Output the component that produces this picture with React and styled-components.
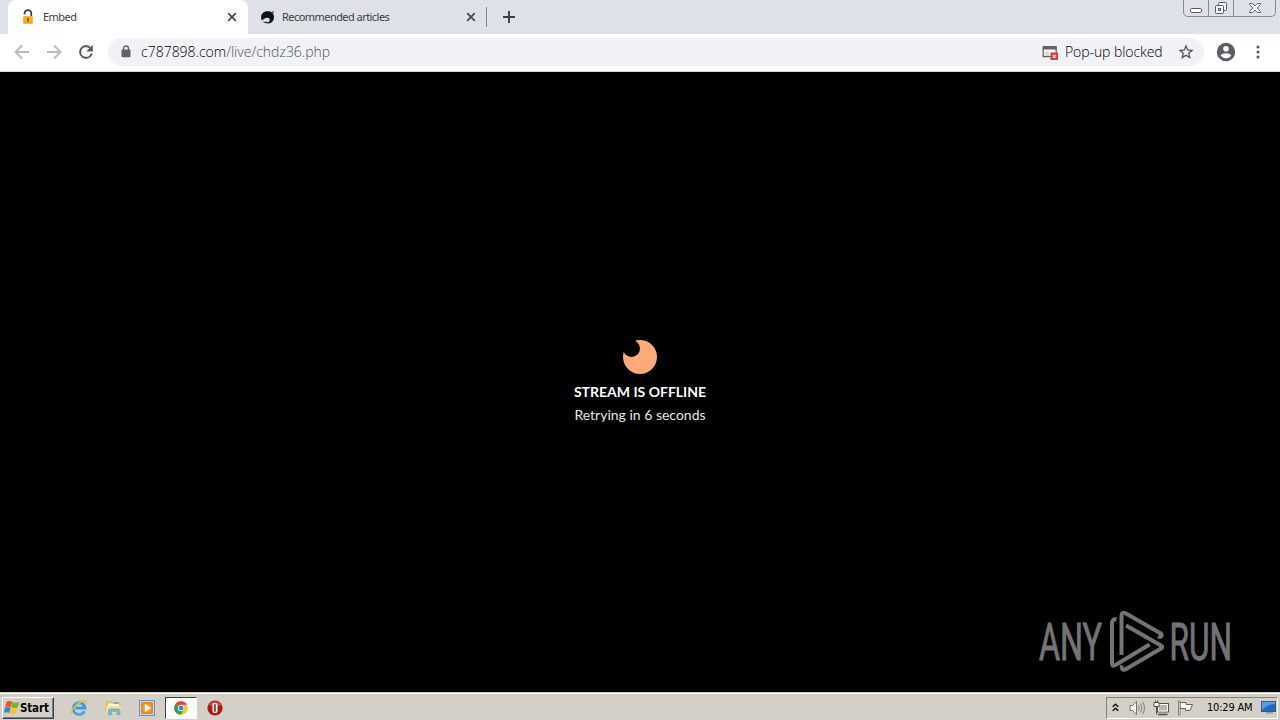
import React from "react";
import styled, { createGlobalStyle } from "styled-components";

const GlobalStyle = createGlobalStyle`
    * {
        box-sizing: border-box;
    }

    body {
        margin: 0;
        background: #000;
        overflow: hidden;
    }

    svg {
        display: block;
        flex: none;
    }
`;

const LockFavicon = () => (
    <svg width="16" height="16" viewBox="0 0 16 16">
        <path d="M4.500 5.500V4.600a3.400 3.400 0 0 1 6.800 0V7" fill="none" stroke="#3b3b3b" strokeWidth="1.700" />
        <rect x="3.200" y="7" width="9.600" height="7.600" rx="1" fill="#fbb216" />
        <path d="M3.400 12.500h9.200v1.200q0 .9-1 .9H4.400q-1 0-1-.9z" fill="#ef9a12" />
        <path d="M7.300 9h1.500v3.200H7.300z" fill="#70430b" />
    </svg>
);

const ArticlesFavicon = () => (
    <svg width="16" height="16" viewBox="0 0 16 16">
        <path d="M2 11.500C-.2 8 1.500 3.500 5.500 2.500c3-.8 5.500-.3 7 1.500 2 2.500 2 6 .2 8.200-1.600 2-4.500 2.800-7.200 1.800 2.500-.3 4.200-1.500 4.300-3.300 0-1.700-1.500-2.400-3.300-1.900-1.700.4-2.700 1.500-4.500 2.700z" fill="#0c1020" />
        <path d="M2.500 12.200q2 1.300 4 .3l.8 1.300q-3.200.8-4.800-1.600z" fill="#0c1020" />
        <path d="M11.500 3l2.500-1.300-.6 3z" fill="#4c5160" />
    </svg>
);

const CloseIcon = () => (
    <svg width="10" height="10" viewBox="0 0 10 10">
        <path d="M1.200 1.200l7.600 7.600M8.800 1.200L1.200 8.800" stroke="#45494d" strokeWidth="1.700" />
    </svg>
);

const PlusIcon = () => (
    <svg width="14" height="14" viewBox="0 0 14 14">
        <path d="M7 1v12M1 7h12" stroke="#3c4043" strokeWidth="1.900" />
    </svg>
);

const ArrowIcon = ({ forward }) => (
    <svg width="24" height="24" viewBox="0 0 24 24">
        <path
            d={forward ? "M5 12h13M12 5.500l6.500 6.500-6.500 6.500" : "M19 12H6M12 5.500L5.500 12l6.500 6.500"}
            fill="none"
            stroke="#bababc"
            strokeWidth="1.900"
        />
    </svg>
);

const ReloadIcon = () => (
    <svg width="20" height="20" viewBox="0 0 24 24">
        <path
            d="M17.650 6.350A7.960 7.960 0 0 0 12 4a8 8 0 1 0 7.730 10h-2.080A6 6 0 1 1 12 6c1.660 0 3.140.690 4.220 1.780L13 11h7V4z"
            fill="#55585c"
            stroke="#55585c"
            strokeWidth=".5"
        />
    </svg>
);

const PadlockIcon = () => (
    <svg width="10" height="13" viewBox="0 0 10 13">
        <path d="M2.500 5V3.500a2.500 2.500 0 0 1 5 0V5" fill="none" stroke="#5f6368" strokeWidth="1.400" />
        <rect x=".5" y="4.500" width="9" height="7.800" rx="1" fill="#5f6368" />
    </svg>
);

const PopupIcon = () => (
    <svg width="16" height="16" viewBox="0 0 16 16">
        <path d="M1.200 3h13v9.500h-13z" fill="#fff" stroke="#5f6368" strokeWidth="1.300" />
        <path d="M1 2h13.500v3.500H1z" fill="#5f6368" />
        <path d="M3 8h4M3 10h4" stroke="#b5b8bb" />
        <rect x="8.500" y="8.500" width="7.500" height="7.500" fill="#d93b3f" />
        <path d="M10.800 10.800l3 3M13.800 10.800l-3 3" stroke="#fff" strokeWidth="1.200" />
    </svg>
);

const StarIcon = () => (
    <svg width="18" height="18" viewBox="0 0 24 24">
        <path
            d="M22 9.240l-7.190-.620L12 2 9.190 8.630 2 9.240l5.460 4.730L5.820 21 12 17.270 18.180 21l-1.630-7.030zM12 15.400l-3.760 2.270 1-4.280-3.320-2.880 4.380-.380L12 6.100l1.710 4.040 4.380.380-3.320 2.880 1 4.280z"
            fill="#505458"
            stroke="#505458"
            strokeWidth=".2"
        />
    </svg>
);

const AvatarIcon = () => (
    <svg width="20" height="20" viewBox="0 0 20 20">
        <circle cx="10" cy="10" r="9.200" fill="#5a5d61" />
        <circle cx="10" cy="6.800" r="2.800" fill="#fff" />
        <path d="M4.500 13.600Q6 11.200 10 11.200t5.500 2.400Q13.500 16.300 10 16.300t-5.500-2.700z" fill="#fff" />
    </svg>
);

const MenuIcon = () => (
    <svg width="4" height="14" viewBox="0 0 4 14">
        <circle cx="2" cy="2" r="1.500" fill="#55585c" />
        <circle cx="2" cy="7" r="1.500" fill="#55585c" />
        <circle cx="2" cy="12" r="1.500" fill="#55585c" />
    </svg>
);

const MinimizeGlyph = () => (
    <svg width="14" height="14" viewBox="0 0 14 14">
        <rect x="1.500" y="7.500" width="11" height="4" rx="1.200" fill="#fff" stroke="#565b66" />
    </svg>
);

const RestoreGlyph = () => (
    <svg width="14" height="14" viewBox="0 0 14 14">
        <rect x="4.500" y="1.500" width="8" height="8" rx="1" fill="#f4f5f8" stroke="#565b66" />
        <rect x="1.500" y="4.500" width="8" height="8" rx="1" fill="#f4f5f8" stroke="#565b66" />
        <rect x="4.500" y="7.500" width="2" height="2" fill="#fff" stroke="#565b66" />
    </svg>
);

const CloseGlyph = () => (
    <svg width="14" height="12" viewBox="0 0 14 12">
        <path
            d="M1.500 1.500h3.200L7 3.800l2.300-2.300h3.200v1L9.200 6l3.300 3.500v1H9.300L7 8.200l-2.300 2.300H1.500v-1L4.800 6 1.500 2.500z"
            fill="#f7f8fa"
            stroke="#565b66"
        />
    </svg>
);

const Moon = () => (
    <svg width="34" height="34" viewBox="0 0 34 34">
        <circle cx="17" cy="17" r="17" fill="#ffab78" />
        <circle cx="8.500" cy="8.500" r="8.500" fill="#000" />
        <path d="M0 0h13L8 9 0 12z" fill="#000" />
    </svg>
);

const AnyRunLogo = () => (
    <svg width="210" height="72" viewBox="0 0 210 72">
        <g fill="#747474" stroke="#747474" strokeWidth="1" fontFamily="Roboto, sans-serif" fontSize="52">
            <text x="3" y="51" textLength="63" lengthAdjust="spacingAndGlyphs">ANY</text>
            <text x="133.500" y="51" textLength="62.500" lengthAdjust="spacingAndGlyphs">RUN</text>
        </g>
        <g fill="none" stroke="#747474" strokeWidth="4" strokeLinejoin="round">
            <path d="M80.500 10.500c-3-.7-4.500 1-4.500 3.500v40q0 4 3.500 2L113.500 35.500" />
            <path d="M85.500 46V7q0-5 4.500-2.500L124 24c3 2 1.500 5-2 3.500" />
            <path d="M90 16.500L125 36.500q2.500 1.500 0 3L90 60c-3 1.800-5-.5-4-3.500" />
        </g>
    </svg>
);

const WindowsFlag = () => (
    <svg width="16" height="15" viewBox="0 0 16 15">
        <path d="M2.800 1.600Q5.500.2 8.300 1.700L6.900 7Q4 5.800 1.200 7z" fill="#e9562a" />
        <path d="M8.700 2.100q2.900 1.500 6.500-.1l-1.700 5.400Q10 8.500 7.300 7.200z" fill="#79b52b" />
        <path d="M1 7.500q2.900-1.200 5.700 0L5.200 13Q2.600 11.600-.2 12.900z" fill="#3c83d8" />
        <path d="M7.100 7.900q2.800 1.300 6.100.1l-1.600 5.300q-3.200 1.500-6-.1z" fill="#f9c428" />
    </svg>
);

const ExplorerIcon = () => (
    <svg width="18" height="18" viewBox="0 0 18 18">
        <path d="M14.300 12.200a5.800 5.800 0 1 1 .6-3.200H5.500" fill="none" stroke="#3b9fdf" strokeWidth="2.900" />
        <path d="M13 12.500a5 5 0 0 1-8-.5" fill="none" stroke="#86d0f4" />
        <path d="M2 15.500C-.5 13 5.500 5 11.500 2.500c3-1.300 5-1 4.500 1.500" fill="none" stroke="#e8bd35" strokeWidth="1.500" />
    </svg>
);

const FolderIcon = () => (
    <svg width="17" height="17" viewBox="0 0 17 17">
        <path d="M1 3.500l1-1h4l1 1.500h8v9H1z" fill="#e9cb67" stroke="#cda73e" strokeWidth=".6" />
        <path d="M3 4.500h11V9H3z" fill="#f8f6dd" />
        <path d="M8.500 3h5v2h-5z" fill="#72bb70" />
        <path d="M1 7h15v7H1z" fill="#f5df91" />
        <path d="M3.500 15.500V12q0-2 2-2H13q2 0 2 2v3.500h-3V12.300H6.500v3.200z" fill="#75bce2" stroke="#5199c6" strokeWidth=".6" />
    </svg>
);

const PlayerIcon = () => (
    <svg width="16" height="16" viewBox="0 0 16 16">
        <rect x=".5" y=".5" width="15" height="15" fill="#bddcf4" stroke="#5798cd" />
        <rect x="2" y="2" width="12" height="12" rx="1.500" fill="#ef8517" />
        <circle cx="8" cy="8" r="4.700" fill="#f39a35" />
        <path d="M5.800 3.800L12 8l-6.200 4.200z" fill="#fff" />
    </svg>
);

const ChromeIcon = () => (
    <svg width="14" height="14" viewBox="0 0 14 14">
        <circle cx="7" cy="7" r="6.800" fill="#fbc91e" />
        <path d="M7 7L1.100 3.600A6.800 6.800 0 0 1 12.900 3.800H7z" fill="#e1443a" />
        <path d="M7 7L1.100 3.600A6.800 6.800 0 0 0 6.600 13.800L10 8.500z" fill="#30a350" />
        <circle cx="7" cy="7" r="3.200" fill="#fff" />
        <circle cx="7" cy="7" r="2.500" fill="#4285e8" />
    </svg>
);

const OperaIcon = () => (
    <svg width="16" height="16" viewBox="0 0 16 16">
        <circle cx="8" cy="8" r="7.600" fill="#b01818" />
        <path d="M2 5a6.800 6.800 0 0 1 12 0q-6 2.500-12 0z" fill="#d54c48" />
        <rect x="5.500" y="3" width="5" height="10" rx="2" fill="#fff" />
        <rect x="7.200" y="4" width="1.600" height="8" rx=".8" fill="#a01616" />
    </svg>
);

const ChevronsIcon = () => (
    <svg width="7" height="9" viewBox="0 0 7 9">
        <path d="M.7 3.800l2.800-2.600 2.800 2.600M.7 7.800l2.800-2.600 2.800 2.600" fill="none" stroke="#111" strokeWidth="1.500" />
    </svg>
);

const SpeakerIcon = () => (
    <svg width="17" height="16" viewBox="0 0 17 16">
        <path d="M1 5.500h2.500l4-4v13l-4-4H1z" fill="#fff" stroke="#77736c" />
        <path d="M9.500 5.500q1.500 2.500 0 5M11.500 3.500q3 4.500 0 9M13.500 1.800q4 6.200 0 12.400" fill="none" stroke="#858078" />
    </svg>
);

const NetworkIcon = () => (
    <svg width="17" height="16" viewBox="0 0 17 16">
        <rect x="4.500" y="3.500" width="11" height="8.500" fill="#b9b6b0" stroke="#54514c" />
        <path d="M5.500 11V4.500h9V11z" fill="none" stroke="#fff" />
        <path d="M5 14.500h9.500" stroke="#54514c" strokeWidth="1.600" />
        <path d="M1 2.500h5v4H1zM2.500.5v2M4.500.5v2M3.500 7v7.500" fill="#fff" stroke="#54514c" />
    </svg>
);

const FlagIcon = () => (
    <svg width="17" height="16" viewBox="0 0 17 16">
        <path d="M3 2.500h6v2h6.500L13 10.500H8.500v-2H3z" fill="#fff" stroke="#67635e" />
        <path d="M1.500 1h1.500v14H1.500z" fill="#fff" stroke="#67635e" strokeWidth=".8" />
    </svg>
);

const DesktopIcon = () => (
    <svg width="15" height="13" viewBox="0 0 15 13">
        <rect x=".5" y=".5" width="14" height="10" fill="#2469be" stroke="#315a91" />
        <path d="M1 1h13v2Q7 3 1 9z" fill="#5b9ce1" />
        <path d="M5 12h7" stroke="#6e8094" />
    </svg>
);

const App = () => {
    return (
        <Screen>
            <GlobalStyle />
            <TabStrip>
                <Tab $active>
                    <LockFavicon />
                    <TabTitle $gap="7px">Embed</TabTitle>
                    <CloseIcon />
                </Tab>
                <Tab>
                    <ArticlesFavicon />
                    <TabTitle $gap="6px">Recommended articles</TabTitle>
                    <CloseIcon />
                </Tab>
                <TabDivider />
                <PlusIcon />
                <WindowControls>
                    <WindowButton $width="24px"><MinimizeGlyph /></WindowButton>
                    <WindowButton $width="25px"><RestoreGlyph /></WindowButton>
                    <WindowButton $width="42px"><CloseGlyph /></WindowButton>
                </WindowControls>
            </TabStrip>
            <Toolbar>
                <NavButtons>
                    <ArrowIcon />
                    <ArrowIcon forward />
                    <ReloadIcon />
                </NavButtons>
                <AddressBar>
                    <PadlockIcon />
                    <Url><b>c787898.com</b>/live/chdz36.php</Url>
                    <PopupIcon />
                    <PopupNotice>Pop-up blocked</PopupNotice>
                    <StarIcon />
                </AddressBar>
                <ToolbarActions>
                    <AvatarIcon />
                    <MenuIcon />
                </ToolbarActions>
            </Toolbar>
            <Page>
                <Moon />
                <StreamTitle>STREAM IS OFFLINE</StreamTitle>
                <StreamStatus>Retrying in 6 seconds</StreamStatus>
                <Watermark>
                    <AnyRunLogo />
                </Watermark>
            </Page>
            <Taskbar>
                <StartButton>
                    <WindowsFlag />
                    Start
                </StartButton>
                <QuickLaunch>
                    <TaskItem><ExplorerIcon /></TaskItem>
                    <TaskItem><FolderIcon /></TaskItem>
                    <TaskItem><PlayerIcon /></TaskItem>
                    <TaskItem $active><ChromeIcon /></TaskItem>
                    <TaskItem><OperaIcon /></TaskItem>
                </QuickLaunch>
                <Tray>
                    <ChevronsIcon />
                    <TrayIcons>
                        <SpeakerIcon />
                        <NetworkIcon />
                        <FlagIcon />
                    </TrayIcons>
                    <Clock>10:29 AM</Clock>
                    <DesktopIcon />
                </Tray>
            </Taskbar>
        </Screen>
    );
};

const Screen = styled.div`
    display: flex;
    flex-direction: column;
    width: 1280px;
    height: 720px;
    font-family: "DejaVu Sans Condensed", "DejaVu Sans", sans-serif;
`;

const TabStrip = styled.div`
    display: flex;
    align-items: center;
    height: 34px;
    padding-left: 8px;
    background: #dee1e8;
`;

const Tab = styled.div`
    display: flex;
    align-items: center;
    width: ${({ $active }) => ($active ? "240px" : "238px")};
    height: 34px;
    padding: 0 ${({ $active }) => ($active ? "11px" : "10px")} 0 12px;
    background: ${({ $active }) => ($active ? "#fff" : "transparent")};
    border-radius: 8px 8px 0 0;
`;

const TabTitle = styled.span`
    flex: 1;
    margin-left: ${({ $gap }) => $gap};
    color: #3c4043;
    font-family: "Noto Sans", sans-serif;
    font-size: 11px;
    line-height: 16px;
    letter-spacing: -0.55px;
    white-space: nowrap;
`;

const TabDivider = styled.div`
    width: 1px;
    height: 20px;
    margin-right: 15px;
    background: #85898f;
`;

const WindowControls = styled.div`
    display: flex;
    align-self: flex-start;
    height: 17px;
    margin-left: auto;
    margin-right: 4px;
    border: 1px solid #858a96;
    border-top: 0;
    border-radius: 0 0 5px 5px;
`;

const WindowButton = styled.div`
    display: flex;
    align-items: center;
    justify-content: center;
    width: ${({ $width }) => $width};

    & + & {
        border-left: 1px solid #858a96;
    }
`;

const Toolbar = styled.div`
    display: flex;
    align-items: center;
    height: 38px;
    padding: 0 20px 2px 10px;
    background: #fff;
    border-bottom: 1px solid #d5d7da;
`;

const NavButtons = styled.div`
    display: flex;
    align-items: center;
    gap: 8px;
    width: 98px;

    svg:last-child {
        margin-left: 2px;
    }
`;

const AddressBar = styled.div`
    display: flex;
    align-items: center;
    width: 1096px;
    height: 28px;
    padding: 0 9px 0 13px;
    background: #f0f2f5;
    border-radius: 14px;
`;

const Url = styled.span`
    flex: 1;
    margin-left: 10px;
    color: #4f5358;
    font-family: "Open Sans", "Noto Sans", sans-serif;
    font-size: 14px;
    font-weight: 300;

    b {
        color: #000;
        font-weight: 300;
    }
`;

const PopupNotice = styled.span`
    width: 98px;
    margin: 0 14px 0 7px;
    color: #000;
    font-family: "Open Sans", "Noto Sans", sans-serif;
    font-size: 14px;
    font-weight: 300;
    letter-spacing: -0.08px;
    white-space: nowrap;
`;

const ToolbarActions = styled.div`
    display: flex;
    align-items: center;
    gap: 20px;
    margin-left: 12px;
`;

const Page = styled.main`
    position: relative;
    display: flex;
    flex-direction: column;
    align-items: center;
    height: 620px;
    padding-top: 268px;
    background: #000;
    color: #fff;
    font-family: Lato, sans-serif;
    font-size: 14px;
`;

const StreamTitle = styled.div`
    margin-top: 8px;
    font-weight: 700;
    line-height: 20px;
    white-space: nowrap;
`;

const StreamStatus = styled.div`
    margin-top: 3px;
    color: #e6e6e6;
    line-height: 20px;
    white-space: nowrap;
`;

const Watermark = styled.div`
    position: absolute;
    right: 34px;
    bottom: 11px;
`;

const Taskbar = styled.div`
    display: flex;
    align-items: center;
    height: 28px;
    padding: 2px 2px 0 2px;
    background: #d4d0c8;
    border-top: 1px solid #d4d0c8;
    box-shadow: inset 0 1px 0 #fff;
`;

const StartButton = styled.div`
    display: flex;
    align-items: center;
    width: 52px;
    height: 22px;
    padding-left: 1px;
    border: 1px solid;
    border-color: #fff #404040 #404040 #fff;
    box-shadow: inset -1px -1px 0 #808080;
    color: #000;
    font-size: 11.5px;
    font-weight: 700;
    letter-spacing: -0.15px;
`;

const QuickLaunch = styled.div`
    display: flex;
    margin-left: 9px;
    gap: 2px;
`;

const TaskItem = styled.div`
    display: flex;
    align-items: center;
    justify-content: center;
    width: 32px;
    height: 22px;
    background: ${({ $active }) => ($active ? "#fff" : "transparent")};
    border: 1px solid;
    border-color: ${({ $active }) => ($active ? "#404040 #fff #fff #404040" : "transparent")};
`;

const Tray = styled.div`
    display: flex;
    align-items: center;
    width: 172px;
    height: 22px;
    margin-left: auto;
    padding: 0 1px 0 5px;
    border: 1px solid;
    border-color: #808080 #fff #fff #808080;
`;

const TrayIcons = styled.div`
    display: flex;
    gap: 7px;
    margin-left: 10px;
`;

const Clock = styled.span`
    flex: 1;
    margin-left: 13px;
    color: #000;
    font-size: 11px;
    letter-spacing: -0.2px;
    white-space: nowrap;
`;

export default App;
